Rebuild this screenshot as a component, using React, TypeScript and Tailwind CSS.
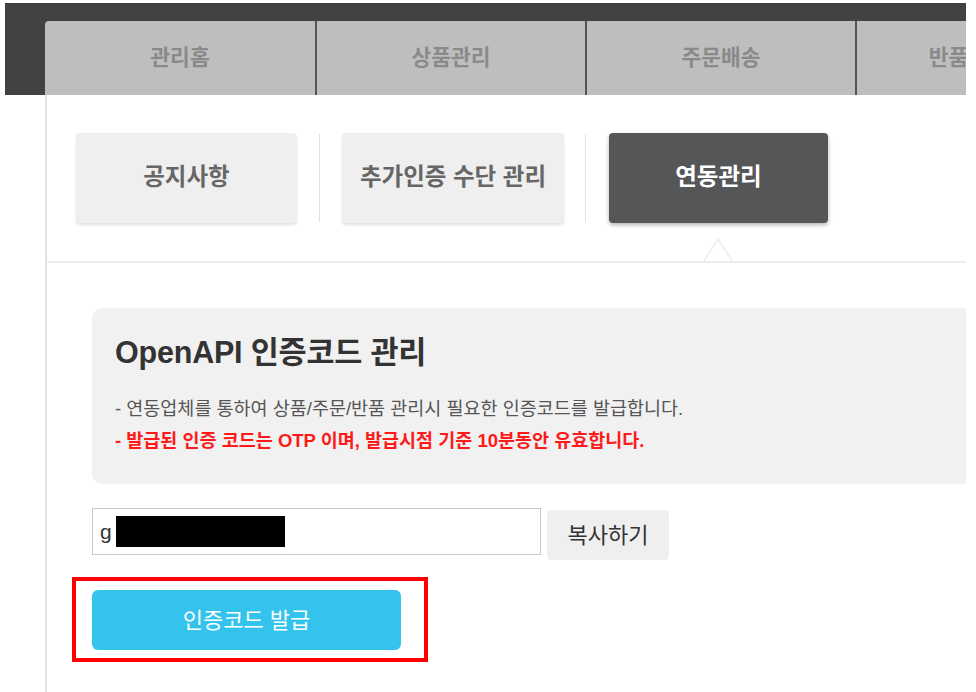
const font = { fontFamily: '"Liberation Sans", "Noto Sans CJK KR", sans-serif' };

const topTabs = ['관리홈', '상품관리', '주문배송', '반품/교환관리'];

export default function App() {
  return (
    <div
      className="w-[976px] h-[692px] bg-white overflow-hidden flex flex-col"
      style={font}
    >
      {/* Top navigation */}
      <div className="pt-[3px] pl-[5px] shrink-0">
        <div className="w-[961px] h-[92px] bg-[#424242] flex items-end pl-[40px] overflow-hidden">
          <div className="flex h-[74px] shrink-0">
            {topTabs.map((t, i) => (
              <div
                key={t}
                className={`w-[270px] shrink-0 h-full bg-[#bebebe] flex items-center justify-center text-[21.5px] font-bold text-[#8a8a8a] ${
                  i > 0 ? 'border-l-2 border-[#555]' : 'rounded-tl-[4px]'
                }`}
              >
                {t}
              </div>
            ))}
          </div>
        </div>
      </div>

      {/* Content */}
      <div className="ml-[45px] w-[921px] flex-1 border-l-2 border-[#e2e2e2]">
        {/* Sub tabs */}
        <div className="flex items-center pt-[38px] pl-[29px]">
          <div className="w-[221px] h-[90px] bg-[#efefef] rounded-[4px] shadow-[0_2px_3px_rgba(0,0,0,0.12)] flex items-center justify-center text-[23.5px] font-bold text-[#666]">
            공지사항
          </div>
          <div className="w-px h-[88px] bg-[#e3e3e3] mx-[22px]" />
          <div className="w-[222px] h-[90px] bg-[#efefef] rounded-[4px] shadow-[0_2px_3px_rgba(0,0,0,0.12)] flex items-center justify-center text-[23.5px] font-bold text-[#666]">
            추가인증 수단 관리
          </div>
          <div className="w-px h-[88px] bg-[#e3e3e3] ml-[21px] mr-[23px]" />
          <div className="w-[219px] h-[90px] bg-[#555657] rounded-[4px] shadow-[0_2px_4px_rgba(0,0,0,0.3)] flex items-center justify-center text-[23.5px] font-bold text-white">
            연동관리
          </div>
        </div>

        {/* Divider with pointer */}
        <div className="relative mt-[15px] h-[23px]">
          <svg
            className="absolute left-[655px] top-0"
            width="32"
            height="23"
            viewBox="0 0 32 23"
          >
            <path d="M2 23 L16 1 L30 23" fill="white" stroke="#ececec" strokeWidth="1.5" />
          </svg>
        </div>
        <div className="h-[2px] bg-[#eeeeee]" />

        {/* Info box */}
        <div className="ml-[45px] mt-[45px] h-[176px] bg-[#f1f1f1] rounded-l-[10px] pl-[23px] pt-[27px]">
          <h2 className="text-[30.5px] font-bold text-[#333] leading-[34px] tracking-[-0.2px]">
            OpenAPI 인증코드 관리
          </h2>
          <p className="mt-[30px] text-[18.5px] text-[#555] leading-[20px]">
            - 연동업체를 통하여 상품/주문/반품 관리시 필요한 인증코드를 발급합니다.
          </p>
          <p className="mt-[12px] text-[18.5px] font-bold text-[#ff1a1a] leading-[20px]">
            - 발급된 인증 코드는 OTP 이며, 발급시점 기준 10분동안 유효합니다.
          </p>
        </div>

        {/* Code input */}
        <div className="ml-[45px] mt-[24px] flex items-start gap-[6px]">
          <div className="w-[449px] h-[47px] border border-[#c9c9c9] bg-white flex items-center pl-[7px]">
            <span className="text-[21px] text-[#333]">g</span>
            <div className="ml-[4px] w-[169px] h-[31px] bg-black" />
          </div>
          <button className="mt-[2px] w-[122px] h-[50px] bg-[#efefef] rounded-[4px] text-[22px] text-[#333]">
            복사하기
          </button>
        </div>

        {/* Issue button */}
        <div className="ml-[25px] mt-[17px] w-[356px] h-[85px] border-4 border-[#ff0000] pl-[16px] pt-[9px]">
          <button className="w-[309px] h-[60px] bg-[#33c3ec] rounded-[6px] text-[22px] text-white">
            인증코드 발급
          </button>
        </div>
      </div>
    </div>
  );
}
